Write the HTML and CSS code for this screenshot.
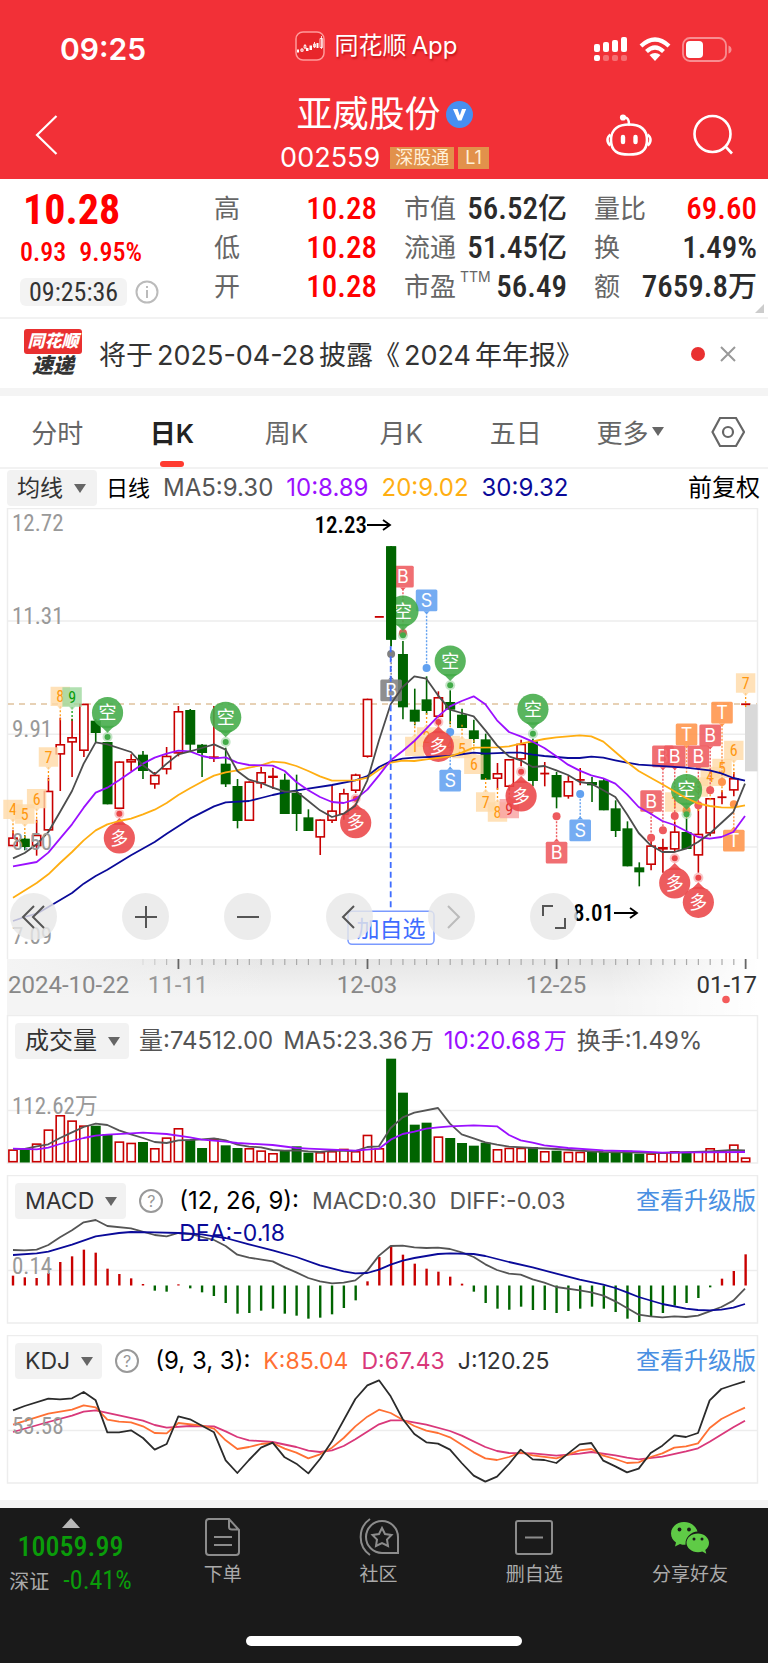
FILE: index.html
```html
<!DOCTYPE html>
<html lang="zh-CN">
<head>
<meta charset="utf-8">
<meta name="viewport" content="width=device-width, initial-scale=1">
<title>亚威股份 002559</title>
<link rel="stylesheet" href="styles.css">
</head>
<body>
<header class="top">
  <div class="status">
    <span class="clock">09:25</span>
    <span class="app">
      <svg class="app-icon" viewBox="0 0 30 30" aria-hidden="true">
        <rect x="1" y="1" width="28" height="28" rx="7" fill="#e8262b" stroke="#ff9a9a" stroke-width="1.5"/>
        <path d="M2 18.500h2v3h-2z M11 17h2.500v3h-2.500z M14.500 14.500h2.500v4.500h-2.500z M21.500 12h2v5h-2z" fill="#fff"/>
        <path d="M7 17v4M5.800 18.200h2.400v2h-2.400z M10 13v5M9 14.500h2v2.500h-2z M19.500 11v6M18.500 13h2v3h-2z M26.500 5v13M25 7.500h2.600v9h-2.600z" fill="#e8262b" stroke="#fff" stroke-width=".8"/>
      </svg>
      <span>同花顺</span><span>App</span>
    </span>
    <span class="radios">
      <svg width="34" height="25" viewBox="0 0 34 25" fill="#fff" aria-hidden="true">
        <rect x="0" y="7" width="6" height="8" rx="2"/><rect x="9" y="5" width="6" height="10" rx="2"/><rect x="18" y="3" width="6" height="12" rx="2"/><rect x="27" y="0" width="6" height="15" rx="2"/>
        <rect x="0" y="18" width="6" height="6" rx="2"/><g opacity=".3"><rect x="9" y="18" width="6" height="6" rx="2"/><rect x="18" y="18" width="6" height="6" rx="2"/><rect x="27" y="18" width="6" height="6" rx="2"/></g>
      </svg>
      <svg width="32" height="25" viewBox="0 0 32 25" aria-hidden="true">
        <path d="M2 9Q16-4 30 9M7.500 14.500Q16 6.500 24.500 14.500" fill="none" stroke="#fff" stroke-width="4.200"/>
        <path d="M10.500 18Q16 14 21.500 18L16 24z" fill="#fff"/>
      </svg>
      <svg width="50" height="25" viewBox="0 0 50 25" aria-hidden="true">
        <rect x="1" y="1" width="43" height="23" rx="7" fill="none" stroke="#fff" stroke-opacity=".45" stroke-width="1.800"/>
        <rect x="4" y="4" width="17" height="17" rx="4" fill="#fff"/><path d="M46.500 8.500q3 1 3 4t-3 4z" fill="#fff" opacity=".45"/>
      </svg>
    </span>
  </div>
  <div class="titlebar">
    <button class="icon-btn back" aria-label="返回"><svg width="24" height="42" viewBox="0 0 24 42"><path d="M21.500 2L2 21L21.500 40" fill="none" stroke="#fff" stroke-width="2.200"/></svg></button>
    <div class="names">
      <h1>亚威股份<svg width="27" height="27" viewBox="0 0 27 27" aria-hidden="true"><circle cx="13.500" cy="13.500" r="13.500" fill="#468ff0"/><path d="M7 8h4.500l2.300 6.500L16 8h4.200L15.500 19.500h-3.500z" fill="#fff"/></svg></h1>
      <p><span class="code">002559</span><span class="tag">深股通</span><span class="tag">L1</span></p>
    </div>
    <div class="tools">
      <button class="icon-btn" aria-label="助手"><svg width="46" height="42" viewBox="0 0 46 42" fill="none" stroke="#fff" stroke-width="2.600"><path d="M23 10.500c10 0 18 4 18 15.500s-7 14.500-18 14.500S5 37.500 5 26S13 10.500 23 10.500z"/><path d="M23 10.500c0-5-1-6.500-4-7" stroke-linecap="round"/><circle cx="17" cy="3.500" r="1.800" fill="#fff"/><path d="M4.500 20.500c-4 3-4 8 0 11M41.500 20.500c4 3 4 8 0 11"/><path d="M17 23v5M29.500 23v5" stroke-width="4.400" stroke-linecap="round"/></svg></button>
      <button class="icon-btn" aria-label="搜索"><svg width="42" height="42" viewBox="0 0 42 42" fill="none" stroke="#fff" stroke-width="2.600"><circle cx="20.500" cy="20" r="18"/><path d="M33 32l7 7.500"/></svg></button>
    </div>
  </div>
</header>

<main>
  <section class="quote">
    <div class="price">
      <strong>10.28</strong>
      <p><span>0.93</span><span>9.95%</span></p>
      <div class="stamp"><time>09:25:36</time>
        <svg width="24" height="24" viewBox="0 0 24 24" fill="none" stroke="#bbb" stroke-width="2" aria-hidden="true"><circle cx="12" cy="12" r="10.500"/><path d="M12 10v8M12 6v2"/></svg></div>
    </div>
    <dl><div><dt>高</dt><dd class="up">10.28</dd></div><div><dt>低</dt><dd class="up">10.28</dd></div><div><dt>开</dt><dd class="up">10.28</dd></div></dl>
    <dl><div><dt>市值</dt><dd>56.52<b>亿</b></dd></div><div><dt>流通</dt><dd>51.45<b>亿</b></dd></div><div><dt>市盈<sup>TTM</sup></dt><dd>56.49</dd></div></dl>
    <dl><div><dt>量比</dt><dd class="up">69.60</dd></div><div><dt>换</dt><dd>1.49%</dd></div><div><dt>额</dt><dd>7659.8<b>万</b></dd></div></dl>
    <i class="corner"></i>
  </section>

  <section class="news">
    <div class="news-logo"><b>同花顺</b><strong>速递</strong></div>
    <a href="#">将于<span>2025-04-28</span>披露《<span>2024</span>年年报》</a>
    <i class="dot"></i>
    <button class="icon-btn" aria-label="关闭"><svg width="16" height="16" viewBox="0 0 16 16"><path d="M1 1l14 14M15 1L1 15" stroke="#999" stroke-width="2"/></svg></button>
  </section>

  <nav class="tabs">
    <button>分时</button><button class="on">日K</button><button>周K</button><button>月K</button><button>五日</button><button>更多<i class="caret"></i></button>
    <button class="gear" aria-label="设置"><svg width="34" height="32" viewBox="0 0 34 32" fill="none" stroke="#666" stroke-width="2.200"><path d="M9 2h16l8 14l-8 14H9L1.500 16z"/><circle cx="17" cy="16" r="5"/></svg></button>
  </nav>

  <div class="legend ma">
    <button class="pick">均线<i class="caret"></i></button>
    <span class="period">日线</span>
    <span class="c5">MA5:9.30</span><span class="c10">10:8.89</span><span class="c20">20:9.02</span><span class="c30">30:9.32</span>
    <span class="adjust">前复权</span>
  </div>

  <section class="kline">
    <svg id="kline" viewBox="0 0 768 451" role="img" aria-label="日K线"></svg>
    <div class="controls">
      <button aria-label="最早"><svg viewBox="0 0 47 47"><path d="M24 13L13 24l11 11M34 13L23 24l11 11"/></svg></button>
      <button aria-label="放大"><svg viewBox="0 0 47 47"><path d="M13 24h22M24 13v22"/></svg></button>
      <button aria-label="缩小"><svg viewBox="0 0 47 47"><path d="M13 24h22"/></svg></button>
      <button aria-label="前移"><svg viewBox="0 0 47 47"><path d="M28 13L17 24l11 11"/></svg></button>
      <button aria-label="后移" disabled><svg viewBox="0 0 47 47"><path d="M20 13l11 11l-11 11"/></svg></button>
      <button aria-label="全屏"><svg viewBox="0 0 47 47"><path d="M13 23V13h10M35 25v10H25"/></svg></button>
    </div>
  </section>
  <svg id="axis" class="axis" viewBox="0 0 768 56" role="img" aria-label="日期"></svg>

  <section class="panel">
    <svg id="volume" viewBox="0 0 768 149" role="img" aria-label="成交量"></svg>
    <div class="legend vol">
      <button class="pick">成交量<i class="caret"></i></button>
      <span class="c5">量:74512.00</span><span class="c5">MA5:23.36<b>万</b></span><span class="c10">10:20.68<b>万</b></span><span class="c5">换手:1.49%</span>
    </div>
  </section>

  <section class="panel">
    <svg id="macd" viewBox="0 0 768 149" role="img" aria-label="MACD"></svg>
    <div class="legend">
      <button class="pick">MACD<i class="caret"></i></button>
      <button class="help" aria-label="MACD说明">?</button>
      <div class="values wrap"><span class="params">(12, 26, 9):</span><span class="c5">MACD:0.30</span><span class="c5">DIFF:-0.03</span><span class="c30">DEA:-0.18</span></div>
      <a href="#">查看升级版</a>
    </div>
  </section>

  <section class="panel">
    <svg id="kdj" viewBox="0 0 768 149" role="img" aria-label="KDJ"></svg>
    <div class="legend">
      <button class="pick">KDJ<i class="caret"></i></button>
      <button class="help" aria-label="KDJ说明">?</button>
      <div class="values"><span class="params">(9, 3, 3):</span><span class="ck">K:85.04</span><span class="cd">D:67.43</span><span class="cj">J:120.25</span></div>
      <a href="#">查看升级版</a>
    </div>
  </section>
</main>

<footer>
  <div class="bar">
    <button class="index"><i></i><b>10059.99</b><span>深证<em>-0.41%</em></span></button>
    <button><svg width="36" height="38" viewBox="0 0 36 38"><path d="M3 1h21l10 11v22q0 3-3 3H4q-3 0-3-3V4q0-3 3-3M24 1v8q0 2.500 3 2.500h7M9 19h18M9 27h18"/></svg>下单</button>
    <button><svg width="42" height="38" viewBox="0 0 42 38"><path d="M24 3a16 16 0 0 1 16 16v16H24a16 16 0 0 1 0-32zM12 1A22 22 0 0 0 12 37"/><path d="M24 10l3 6l6.500 1l-4.500 4.500l1 6.500l-6-3l-6 3l1-6.500l-4.500-4.500l6.500-1z"/></svg>社区</button>
    <button><svg width="38" height="38" viewBox="0 0 38 38"><rect x="1" y="3" width="36" height="33" rx="2"/><path d="M10 19.500h18"/></svg>删自选</button>
    <button><svg class="wechat" width="38" height="38" viewBox="0 0 38 38"><path d="M13 4C6 4 0 9 0 15.500c0 4 2 7 5 9L4 28.500l5-2.500c2 .7 3.500.9 5.500.8C14 19 20 14 26.500 13.500C25 8 19.500 4 13 4z"/><path d="M27 15.500c-6.500 0-11.500 4.200-11.500 9.300s5 9.400 11.500 9.400c1.700 0 3-.2 4.300-.7l4 2.200l-1-3.600c2.400-1.800 3.700-4.300 3.700-7.300c0-5-5-9.300-11-9.300z"/><g fill="#1a1a1a"><circle cx="8.500" cy="11.500" r="1.900"/><circle cx="18" cy="11.500" r="1.900"/><circle cx="23" cy="21" r="1.500"/><circle cx="31" cy="21" r="1.500"/></g></svg>分享好友</button>
  </div>
  <i class="home"></i>
</footer>
<script src="charts.js"></script>
</body>
</html>
```
FILE: styles.css
```css
* { box-sizing: border-box; }
body {
  margin: 0;
  background: #fff;
  color: #333;
  font-family: Inter, "Noto Sans CJK SC", sans-serif;
  font-size: 23px;
}
button { font: inherit; color: inherit; border: 0; padding: 0; background: none; }
a { color: inherit; text-decoration: none; }
p, h1, dl, dd { margin: 0; }
svg { display: block; }
i, em { font-style: normal; }
.icon-btn { display: flex; }

.top { background: #f23037; color: #fff; height: 179px; padding-top: 24px; }
.status { display: grid; grid-template-columns: 1fr auto 1fr; align-items: center; height: 50px; padding: 0 36px 0 20px; }
.clock { font-size: 30px; font-weight: 600; padding-left: 40px; }
.app { display: flex; align-items: center; gap: 5px; font-size: 24px; line-height: 36px; padding-bottom: 7px; text-shadow: 1px 2px 2px #9008; }
.app-icon { width: 30px; height: 30px; margin-right: 5px; }
.radios { display: flex; justify-content: flex-end; gap: 11px; }
.titlebar { display: grid; grid-template-columns: 1fr auto 1fr; padding: 14px 34px 0 35px; }
.back { padding-top: 26px; align-self: start; }
.names { text-align: center; }
h1 { display: flex; align-items: center; justify-content: center; gap: 5px; font-size: 36px; font-weight: 400; line-height: 52px; }
.names p { display: flex; align-items: center; justify-content: center; gap: 4px; line-height: 36px; }
.code { font-size: 27px; margin-right: 6px; }
.tag { background: #e2914b; color: #fff0d8; font-size: 18px; line-height: 22px; padding: 0 5px; }
.tag:last-child { padding: 0 7px; }
.tools { display: flex; justify-content: flex-end; gap: 40px; padding-top: 26px; }

.quote { position: relative; display: grid; grid-template-columns: 167px 1fr 1fr 1fr; column-gap: 27px; padding: 10px 11px 11px 20px; border-bottom: 2px solid #f2f2f2; }
.price, dd, .index { font-family: "Roboto Condensed", "Liberation Sans Narrow", Roboto, "Noto Sans CJK SC", sans-serif; }
.price { color: #f00; }
.price strong { display: block; font-size: 42px; line-height: 42px; padding-left: 3px; }
.price p { display: flex; gap: 13px; font-size: 26px; line-height: 42px; font-weight: 500; }
.stamp { display: flex; align-items: center; gap: 8px; padding-top: 5px; }
.stamp time { background: #f3f3f3; border-radius: 6px; color: #333; font-size: 26px; line-height: 28px; padding: 0 9px; }
dl div { display: flex; justify-content: space-between; height: 39px; line-height: 39px; }
dt { font-size: 26px; color: #666; white-space: nowrap; }
dt sup { font-size: 14px; line-height: 14px; vertical-align: 14px; margin-left: 4px; }
dd { font-size: 31px; font-weight: 500; color: #2b2b2b; white-space: nowrap; }
dd b { font-size: 29px; font-weight: 500; }
.up { color: #f00; }
.corner { position: absolute; right: 4px; bottom: 4px; border-left: 9px solid transparent; border-bottom: 9px solid #ccc; }

.news { display: flex; align-items: center; height: 69px; padding: 0 32px 0 24px; font-size: 27px; }
.news-logo { width: 58px; margin-right: 17px; text-align: center; font-style: italic; }
.news-logo b { display: block; background: #e93030; color: #fff; border-radius: 3px; font-size: 17px; line-height: 25px; font-weight: 900; }
.news-logo strong { display: block; font-size: 21px; line-height: 24px; font-weight: 900; }
.news a { flex: 1; white-space: nowrap; }
.news span { margin: 0 4px; }
.dot { width: 14px; height: 14px; border-radius: 50%; background: #e93030; margin-right: 15px; }

.tabs { display: flex; border-top: 8px solid #f4f4f4; border-bottom: 2px solid #f2f2f2; height: 81px; color: #666; font-size: 26px; }
.tabs button { flex: 20; display: flex; align-items: center; justify-content: center; position: relative; }
.tabs .gear { flex: 14; }
.tabs .on { color: #222; font-weight: 600; }
.tabs .on::after { content: ""; position: absolute; bottom: 0; width: 24px; height: 6px; border-radius: 3px; background: #ff3b30; }
.caret { display: inline-block; border: 6px solid transparent; border-top: 9px solid #666; border-bottom: 0; }
.tabs .caret { margin-left: 4px; }

.legend { display: flex; align-items: flex-start; gap: 13px; line-height: 36px; white-space: nowrap; }
.pick { display: flex; align-items: center; gap: 11px; background: #f2f2f2; border-radius: 4px; height: 36px; padding: 0 10px; color: #333; }
.ma { padding: 1px 8px 2px 7px; font-size: 24px; }
.ma .pick { font-size: 23px; padding-right: 11px; }
.ma .period { color: #000; font-size: 22px; margin-left: -4px; }
.adjust { margin-left: auto; color: #000; }
.c5 { color: #555; }
.c10 { color: #9b10ff; }
.c20 { color: #ffae12; }
.c30 { color: #0a0a99; }
.ck { color: #ff7033; }
.cd { color: #d9387a; }
.cj { color: #333; }

.kline { position: relative; }
.kline > svg, .axis, .panel > svg { width: 100%; }
.controls { position: absolute; left: 10px; bottom: 19px; display: flex; gap: 55px; }
.controls button { width: 47px; height: 47px; border-radius: 50%; background: #e8e8e8d0; }
.controls button:first-child { margin-right: 10px; }
.controls path { fill: none; stroke: #555; stroke-width: 2; }
.controls :disabled path { stroke: #bbb; }

.panel { display: grid; margin-bottom: 11px; }
.panel:last-child { margin-bottom: 16px; }
.panel > svg, .panel > .legend { grid-area: 1 / 1; }
.panel > .legend { padding: 8px 12px 0 15px; }
.panel .pick { padding-right: 9px; }
.panel > .vol { gap: 10px; font-size: 24px; }
.vol b { font-size: 23px; font-weight: 400; margin-left: 3px; }
.legend a { margin-left: auto; font-size: 24px; color: #4a90e2; }
.help { width: 24px; height: 24px; margin: 6px 3px 0 0; border: 2px solid #999; border-radius: 50%; color: #999; font-size: 16px; line-height: 20px; }
.values { display: flex; flex-wrap: wrap; column-gap: 13px; color: #000; }
.params { font-size: 24px; }
.wrap { width: 400px; line-height: 32px; padding-top: 2px; }

.grid { stroke: #ededed; stroke-width: 1.5; fill: none; }
.scale { font: 23px "Roboto Condensed", "Liberation Sans Narrow", Roboto, "Noto Sans CJK SC", sans-serif; fill: #999; }
.date { font: 24px Roboto, sans-serif; fill: #888; }
.peak { font: 500 23px "Roboto Condensed", "Liberation Sans Narrow", Roboto, sans-serif; fill: #000; }
.line { fill: none; stroke-width: 1.8; stroke-linejoin: round; }
.mark { font: 18px Inter, "Noto Sans CJK SC", sans-serif; fill: #fff; text-anchor: middle; }
.count { font: 16px "Roboto Condensed", Roboto, sans-serif; text-anchor: middle; }
.fav { font: 23px "Noto Sans CJK SC", sans-serif; fill: #3f6dff; text-anchor: middle; }

footer { border-top: 8px solid #f4f4f4; background: #1a1a1a; padding-bottom: 17px; }
.bar { display: flex; height: 128px; color: #aaa; font-size: 19px; line-height: 28px; }
.bar button { flex: 1; display: flex; flex-direction: column; align-items: center; padding-top: 10px; gap: 5px; }
.bar svg { fill: none; stroke: #8c8c8c; stroke-width: 2; }
.bar .wechat { fill: #5fcb46; stroke: none; }
.bar .index { flex: none; width: 145px; gap: 0; padding-right: 4px; font-size: 20px; }
.index i { border: 9px solid transparent; border-bottom: 10px solid #b8b8b8; border-top: 0; }
.index b { color: #0a9c0a; font-size: 28px; font-weight: 500; line-height: 38px; }
.index em { color: #0a9c0a; font-size: 26px; margin-left: 14px; }
.home { display: block; width: 36%; height: 10px; margin: 0 auto; border-radius: 5px; background: #fff; }
```
FILE: charts.js
```js
const NS = 'http://www.w3.org/2000/svg';
const UP = '#c80000', DOWN = '#006400';
const COUNT = 63;
// Chart data is kept on a 3-units-per-pixel grid; candle i sits at 39 + 35.45 * i.
const cx = i => (39 + 35.45 * i) / 3;

function add(svg, tag, attrs, text) {
  const el = document.createElementNS(NS, tag);
  for (const k in attrs) el.setAttribute(k, attrs[k]);
  if (text !== undefined) el.textContent = text;
  svg.appendChild(el);
  return el;
}
function line(svg, color, base, data) {
  const n = data.trim().split(/\s+/).map(p => p.split(',').map(Number));
  add(svg, 'polyline', { class: 'line', stroke: color, points: n.map(p => p[0] / 3 + ',' + (p[1] - base) / 3).join(' ') });
}
function frame(svg, h) { add(svg, 'rect', { class: 'grid', x: 7.5, y: .5, width: 750, height: h }); }
function rule(svg, y) { add(svg, 'path', { class: 'grid', d: `M8 ${y}H757` }); }

const candles = `r990,1011,1038,1038 g1005,1015,1040,1050 r958,1003,1038,1066 r832,871,991,991 r652,731,763,872 r655,710,727,830 r610,610,752,770
g657,661,698,725 g725,725,912,912 r783,783,926,926 r762,776,787,812 g752,763,812,836 r815,823,853,865 r740,766,808,822 r617,632,760,768
g626,629,733,752 g731,733,758,830 r617,768,775,785 g742,790,852,860 g836,857,962,984 r843,843,962,962 r800,815,850,864 r802,826,833,866
g820,838,941,941 g823,878,941,992 g927,951,992,992 r957,957,1012,1064 r855,930,962,968 r865,878,944,958 r820,822,872,878 r595,595,770,772
r347,347,350,350 g138,138,418,438 g422,461,621,657 g565,628,664,675 g528,597,632,643 r573,590,650,650 g570,605,628,672 g625,643,683,683
g658,690,716,728 g700,717,838,838 r788,818,836,868 r776,776,860,870 r718,730,778,798 g715,723,842,858 r785,817,820,858 g815,824,891,924
r826,842,889,895 r803,836,839,855 g830,845,855,905 g835,840,930,930 g900,924,992,1010 g963,984,1098,1098 g1086,1101,1116,1158
r1020,1035,1094,1110 r1015,1040,1048,1117 r965,993,1048,1056 g955,995,1046,1046 r920,1000,1066,1117 r893,893,1000,1008 r870,888,892,912
r815,833,871,888 r609,609,612,612`.split(/\s+/).map(s => ({ up: s[0] === 'r', v: s.slice(1).split(',').map(n => (n - 23) / 3) }));

function body(svg, i, up, top, bottom) {
  const x = cx(i), h = bottom - top;
  if (up && h > 2) add(svg, 'rect', { x: x - 4.1, y: top + .8, width: 8.2, height: Math.max(h - 1.6, .5), fill: '#fff', stroke: UP, 'stroke-width': 1.6 });
  else add(svg, 'rect', { x: x - (up ? 4.5 : 5), y: top, width: up ? 9 : 10, height: Math.max(h, 1.8), fill: up ? UP : DOWN });
}
function candle(svg, i) {
  const { up, v } = candles[i], x = cx(i);
  if (v[3] - v[0] > 2) add(svg, 'path', { d: `M${x} ${v[0]}V${v[3]}`, stroke: up ? UP : DOWN, 'stroke-width': 1.6 });
  body(svg, i, up, v[1], v[2]);
}

const k = document.getElementById('kline');
const Y = c => (c - 23) / 3;
frame(k, 460);
[362, 702, 1040].forEach(c => rule(k, Y(c)));
add(k, 'path', { d: `M8 ${Y(611)}H757`, stroke: '#dfc29d', 'stroke-width': 1.3, 'stroke-dasharray': '6 5' });
add(k, 'rect', { x: 745, y: Y(612), width: 12.5, height: 67, fill: '#d9d9d9' });
for (let i = 0; i < COUNT; i++) candle(k, i);

// Sequence counters: index, centre, text, tone, side of the pointer (1 = points down)
const tones = { o: ['#ffd9a6', '#ff9810'], g: ['#9ed89e', '#0a9c0a'], p: ['#f9a0a0', '#e03030'] };
[[0, 927, '4', 'o', 1], [1, 941, '5', 'o', 1], [2, 895, '6', 'o', 1], [3, 770, '7', 'o', 1], [4, 588, '8', 'o', 1], [5, 590, '9', 'g', 1],
 [34, 738, '1', 'o', -1], [35, 710, '2', 'o', -1], [36, 720, '', 'o', -1], [37, 735, '4', 'o', -1], [38, 745, '5', 'o', -1], [39, 792, '6', 'o', -1],
 [40, 905, '7', 'o', -1], [41, 935, '8', 'o', -1], [42, 925, '9', 'p', -1],
 [56, 905, '1', 'o', 1], [57, 880, '', 'o', 1], [58, 860, '3', 'o', 1], [59, 828, '4', 'o', 1], [60, 804, '5', 'o', 1], [61, 750, '6', 'o', 1], [62, 548, '7', 'o', 1]
].forEach(([i, c, t, tone, dir]) => {
  const x = cx(i), y = Y(c), [bg, fg] = tones[tone];
  add(k, 'path', { d: `M${x} ${y + dir * 10}v${dir * 14}`, stroke: fg, 'stroke-width': 1.3, 'stroke-dasharray': '2 2' });
  add(k, 'path', { d: `M${x - 9.7} ${y - 9.7}h19.400v19.400h-19.400z M${x - 3} ${y + dir * 9.7}h6l-3 ${dir * 3.500}z`, fill: bg, opacity: .8 });
  if (t) add(k, 'text', { class: 'count', x, y: y + 6, fill: fg }, t);
});

// Trade tags: index, centre, dot, letter, colour
function tag(i, c, dot, t, color) {
  const x = cx(i), y = Y(c), d = Y(dot), dir = d > y ? 1 : -1;
  add(k, 'path', { d: `M${x} ${y + dir * 12}V${d}`, stroke: color, 'stroke-width': 1.4, 'stroke-dasharray': '2 1.500' });
  add(k, 'circle', { cx: x, cy: d, r: 4, fill: color });
  add(k, 'rect', { x: x - 10.8, y: y - 10.8, width: 21.6, height: 21.6, rx: 1.5, fill: color, opacity: .88 });
  add(k, 'path', { d: `M${x - 3} ${y + dir * 10.8}h6l-3 ${dir * 3}z`, fill: color });
  add(k, 'text', { class: 'mark', x, y: y + 6.5 }, t);
}
const RED = '#ee5a5e', BLUE = '#62a1f0', ORANGE = '#ff944a', GREY = '#808080';
tag(33, 229, 398, 'B', RED);
tag(35, 300, 503, 'S', BLUE);
tag(37, 841, 695, 'S', BLUE);
tag(32, 570, 461, 'B', GREY);
tag(46, 1057, 948, 'B', RED);
tag(48, 990, 881, 'S', BLUE);
tag(54, 902, 1012, 'B', RED);
tag(55, 768, 990, 'B', RED);
tag(56, 768, 947, 'B', RED);
tag(57, 702, 930, 'T', ORANGE);
tag(58, 768, 915, 'B', RED);
tag(59, 705, 870, 'B', RED);
tag(60, 637, 845, 'T', ORANGE);
tag(61, 1021, 912, 'T', ORANGE);

// Long / short signals
function signal(i, c, dot, t) {
  const x = cx(i), y = Y(c), d = Y(dot), color = t === '空' ? '#42ab48' : '#ea4548', dir = d > y ? 1 : -1;
  add(k, 'circle', { cx: x, cy: d, r: 5, fill: color, opacity: .3 });
  add(k, 'circle', { cx: x, cy: d, r: 3, fill: color });
  add(k, 'path', { d: `M${x - 7} ${y + dir * 13}L${x} ${y + dir * 20}L${x + 7} ${y + dir * 13}`, fill: color, opacity: .88 });
  add(k, 'circle', { cx: x, cy: y, r: 15.6, fill: color, opacity: .88 });
  add(k, 'text', { class: 'mark', x, y: y + 6.5 }, t);
}
[[8, 637, 710, '空'], [18, 651, 725, '空'], [33, 332, 405, '空'], [37, 482, 555, '空'], [44, 627, 700, '空'], [57, 868, 942, '空'],
 [9, 1013, 940, '多'], [29, 967, 895, '多'], [36, 738, 665, '多'], [43, 887, 814, '多'], [56, 1148, 1074, '多'], [58, 1206, 1132, '多']
].forEach(s => signal(...s));
candle(k, 32);

line(k, '#0a0a99', 23, `39,1262 74,1250 110,1240 145,1220 216,1178 251,1150 287,1127 322,1108 393,1065 464,1025 500,1000 570,955 642,918 677,906 747,902
783,893 818,884 854,876 925,865 996,854 1066,840 1102,827 1137,800 1172,783 1208,775 1243,772 1350,767 1421,757 1456,760 1527,757 1562,757 1598,763 1633,767
1704,773 1739,773 1774,769 1810,772 1846,780 1881,787 1916,793 2058,802 2129,810 2164,819 2200,833 2235,841`);
line(k, '#ffae12', 23, `39,1192 110,1148 145,1122 180,1088 216,1055 251,1020 287,990 322,972 357,962 393,955 429,942 464,928 500,908 535,884 570,864 606,844
642,826 677,816 712,810 747,802 783,795 818,784 854,787 889,797 925,812 960,828 996,841 1066,840 1102,832 1137,808 1172,787 1208,781 1243,782 1279,777 1350,768
1385,757 1421,742 1491,741 1527,738 1562,730 1598,723 1633,716 1669,711 1739,705 1774,708 1810,724 1846,755 1881,785 1916,812 1952,832 1987,852 2023,873
2058,893 2094,909 2129,917 2164,921 2200,922 2235,915`);
line(k, '#9b10ff', 23, `39,1098 110,1085 145,1057 180,1015 216,972 251,922 287,877 322,862 357,840 393,815 429,790 464,772 500,760 535,751 570,753 606,767
642,774 677,771 712,787 747,794 818,796 854,812 889,845 925,870 960,890 996,905 1031,908 1066,897 1102,868 1137,825 1172,780 1208,752 1243,722 1279,685
1314,648 1350,618 1385,602 1421,588 1456,612 1491,660 1527,695 1562,708 1598,724 1633,743 1669,768 1704,793 1739,811 1774,825 1810,834 1846,850 1881,882
1916,920 1952,940 1987,962 2023,974 2058,992 2094,1010 2129,1015 2164,1010 2200,995 2235,947`);
line(k, '#4d4d4d', 23, `39,1074 74,1058 110,1032 145,995 180,935 216,872 251,790 287,726 322,732 393,755 429,795 464,822 500,790 535,762 570,753 606,743
642,732 677,748 712,812 747,838 783,848 818,862 854,874 889,873 925,902 960,930 996,950 1031,940 1066,916 1102,840 1137,720 1172,612 1208,560 1243,528
1279,535 1314,585 1350,628 1385,638 1421,648 1456,690 1491,735 1527,768 1562,780 1598,800 1633,797 1669,810 1704,824 1739,845 1774,850 1810,870 1846,890
1881,942 1916,998 1952,1035 1987,1055 2023,1055 2058,1045 2094,1025 2129,1000 2164,968 2200,935 2235,850`);

add(k, 'path', { d: `M390.700 ${Y(438)}V${Y(1230)}`, stroke: '#3f6dff', 'stroke-width': 1.8, 'stroke-dasharray': '6 3.800' });
add(k, 'rect', { x: 348, y: Y(1233), width: 86, height: 33, rx: 4, fill: '#fff', stroke: '#7a9aff', 'stroke-width': 1.5 });
add(k, 'text', { class: 'fav', x: 391, y: 429 }, '加自选');
[['12.72', 23], ['11.31', 116], ['9.91', 229], ['8.50', 342], ['7.09', 436]].forEach(([t, y]) => add(k, 'text', { class: 'scale', x: 12, y }, t));
function pointer(t, x, y, a) {
  add(k, 'text', { class: 'peak', x, y, 'text-anchor': 'end' }, t);
  add(k, 'path', { d: `M${x} ${y - 8}h${a}m-7 -5l7 5l-7 5`, fill: 'none', stroke: '#000', 'stroke-width': 1.8 });
}
pointer('12.23', 367, 25, 23);
pointer('8.01', 614, 413, 23);

const a = document.getElementById('axis');
const grad = add(add(a, 'defs', {}), 'linearGradient', { id: 'shade', x1: 0, x2: 0, y1: 0, y2: 1 });
add(grad, 'stop', { offset: 0, 'stop-color': '#e6e6e6' });
add(grad, 'stop', { offset: .7, 'stop-color': '#f4f4f4' });
const fade = add(a.querySelector('defs'), 'linearGradient', { id: 'fade' });
add(fade, 'stop', { offset: 0, 'stop-color': '#f4f4f4' });
add(fade, 'stop', { offset: .35, 'stop-color': '#f4f4f4', 'stop-opacity': 0 });
add(fade, 'stop', { offset: .8, 'stop-color': '#fff', 'stop-opacity': 0 });
add(fade, 'stop', { offset: 1, 'stop-color': '#fff' });
add(a, 'rect', { x: 7, y: 0, width: 751, height: 56, fill: 'url(#shade)' });
add(a, 'rect', { x: 7, y: 0, width: 751, height: 56, fill: 'url(#fade)' });
for (let i = 11; i < COUNT; i++) {
  const major = i % 16 === 14;
  add(a, 'path', { d: `M${cx(i)} 0v${major ? 10 : 6}`, stroke: major ? '#666' : '#aaa', 'stroke-width': major ? 1.8 : 1.2, opacity: i < 14 ? (i - 10) / 4 : 1 });
}
[['2024-10-22', 8, 'start', '#888'], ['11-11', 178, 'middle', '#999'], ['12-03', 367, 'middle', '#888'], ['12-25', 556, 'middle', '#888'], ['01-17', 757, 'end', '#333']]
  .forEach(([t, x, anchor, color]) => add(a, 'text', { class: 'date', x, y: 34, 'text-anchor': anchor, style: `fill:${color}` }, t));
add(a, 'circle', { cx: 726, cy: 40.5, r: 3.8, fill: '#f45b5b' });

const v = document.getElementById('volume');
frame(v, 147.5);
rule(v, 95.5);
'420 420 402 360 317 333 348 349 374 396 400 398 416 384 356 391 416 387 408 416 416 423 431 425 411 430 428 425 418 425 376 416 148 250 346 340 381 386 401 409 400 419 415 415 413 425 424 427 427 428 428 427 424 433 432 428 425 430 425 416 425 405 444'
  .split(' ').forEach((c, i) => body(v, i, candles[i].up, (c - 17) / 3, 147.5));
line(v, '#555', 16, `39,418 74,418 110,410 145,404 180,385 216,368 251,352 287,342 322,346 357,362 393,374 429,385 464,397 500,400 535,392 570,391 606,389
642,386 677,392 712,405 747,411 783,413 818,421 854,423 889,422 925,425 960,427 996,423 1066,424 1102,412 1137,410 1172,355 1208,323 1243,309 1314,295
1350,342 1385,374 1421,386 1456,398 1491,405 1527,411 1598,415 1669,418 1739,423 1810,427 1881,428 1987,430 2129,425 2200,421 2235,422`);
line(v, '#9b10ff', 16, `39,417 110,419 145,414 180,403 216,394 251,385 287,378 322,375 393,371 429,369 500,373 570,383 606,390 677,396 712,400 818,406
889,415 925,417 1066,423 1137,417 1172,390 1208,373 1243,366 1279,357 1314,353 1350,350 1421,347 1491,350 1527,376 1562,392 1598,399 1633,407 1704,415
1810,422 1916,425 1987,429 2094,428 2235,427`);
add(v, 'text', { class: 'scale', x: 12, y: 99 }, '112.62万');

const m = document.getElementById('macd');
frame(m, 147.5);
rule(m, 95.5);
'318 323 325 310 277 260 240 249 297 313 326 343 363 366 344 356 368 379 400 432 430 423 417 432 438 447 444 434 415 392 335 262 232 255 282 297 306 321 342 366 400 417 420 411 421 421 430 424 417 411 417 427 447 457 440 430 408 400 385 353 327 304 254'
  .split(' ').forEach((c, i) => add(m, 'path', { d: `M${cx(i)} 110.500V${(c - 16) / 3}`, stroke: c < 347 ? UP : DOWN, 'stroke-width': 2.4 }));
line(m, '#555', 16, `39,241 74,242 110,240 145,226 180,203 216,182 251,158 287,151 322,169 393,176 464,196 500,200 535,190 570,193 606,202 642,211 677,229
712,255 747,264 818,275 854,293 889,308 925,325 960,335 996,341 1031,339 1066,332 1102,303 1137,258 1172,229 1208,228 1243,233 1279,235 1314,234 1350,238
1385,248 1421,262 1456,284 1491,301 1527,312 1562,315 1598,329 1633,339 1669,352 1739,362 1774,368 1810,378 1846,395 1881,415 1916,435 1952,440 1987,443
2023,440 2058,442 2094,438 2129,425 2164,412 2200,393 2235,357`);
line(m, '#0a0a99', 16, `39,256 110,251 145,246 216,225 287,200 357,190 393,187 464,188 535,190 606,194 642,200 677,205 747,224 818,242 889,262 960,287
1031,305 1066,311 1102,310 1137,300 1172,285 1208,273 1243,265 1314,253 1350,251 1421,253 1456,259 1527,277 1598,293 1669,312 1739,330 1810,345 1846,355
1881,368 1916,382 1987,403 2058,417 2094,421 2129,422 2164,420 2200,414 2235,403`);
add(m, 'text', { class: 'scale', x: 12, y: 99 }, '0.14');

const d = document.getElementById('kdj');
frame(d, 147.5);
rule(d, 95.5);
line(d, '#d9387a', 496, `39,787 145,757 216,738 251,726 287,722 357,737 429,753 464,766 500,774 570,769 642,770 677,785 712,802 747,812 818,817 889,832
925,843 960,847 996,842 1031,829 1066,809 1137,764 1172,752 1208,752 1279,765 1350,784 1385,798 1456,832 1491,844 1527,850 1598,851 1669,858 1739,852
1774,847 1846,857 1881,864 1916,869 1987,861 2058,845 2094,836 2129,816 2200,773 2235,753`);
line(d, '#ff7033', 496, `39,765 145,732 216,720 251,707 287,713 322,750 357,756 393,758 429,770 464,790 500,791 535,760 606,768 642,777 677,812 712,838
747,832 783,823 818,820 854,837 889,849 925,866 960,854 996,834 1031,805 1066,770 1102,741 1137,720 1172,730 1208,750 1243,769 1279,783 1314,790 1350,803
1421,848 1456,866 1491,871 1527,862 1562,848 1598,857 1669,866 1704,855 1739,842 1774,838 1810,858 1846,868 1881,880 1916,878 1952,862 1987,851 2023,834
2058,830 2094,821 2129,775 2164,748 2200,730 2235,714`);
line(d, '#2b2b2b', 496, `39,722 74,709 145,687 180,689 216,686 251,667 287,692 322,788 357,788 393,782 429,805 464,840 500,823 535,740 570,749 642,788
677,872 712,910 747,871 783,834 818,819 854,863 889,882 925,911 960,868 996,815 1066,688 1102,647 1137,632 1172,680 1208,748 1243,793 1279,818 1314,822
1350,840 1385,880 1421,918 1456,936 1491,921 1527,883 1562,840 1598,869 1633,871 1669,880 1704,852 1739,824 1774,820 1810,873 1846,890 1881,908 1916,897
1952,850 1987,828 2023,797 2058,802 2094,790 2129,692 2164,658 2200,646 2235,635`);
add(d, 'text', { class: 'scale', x: 12, y: 99 }, '53.58');
```
